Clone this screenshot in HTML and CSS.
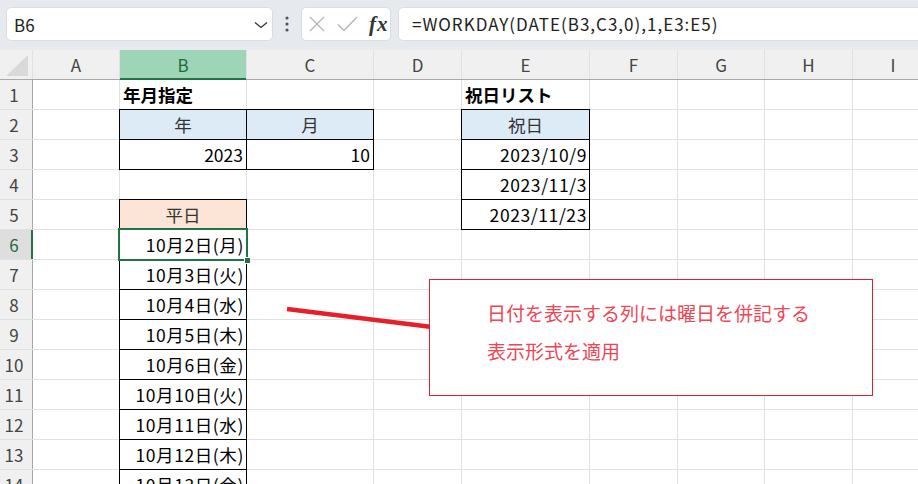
FILE: index.html
```html
<!DOCTYPE html>
<html lang="ja">

<head>
    <meta charset="UTF-8">
    <meta name="viewport" content="width=device-width, initial-scale=1.0">
    <title>WORKDAY</title>
    <link rel="stylesheet" href="styles.css">
</head>

<body>
    <!-- Formula bar -->
    <div class="toolbar">
        <div class="name-box">
            <span>B6</span>
            <svg class="chevron" width="14" height="8" viewBox="0 0 14 8">
                <polyline points="1,1.5 7,6.5 13,1.5" fill="none" stroke="#333" stroke-width="1.3" />
            </svg>
        </div>
        <svg class="dots" width="6" height="16" viewBox="0 0 6 16">
            <circle cx="3" cy="2" r="1.6" fill="#555" />
            <circle cx="3" cy="8" r="1.6" fill="#555" />
            <circle cx="3" cy="14" r="1.6" fill="#555" />
        </svg>
        <div class="fx-box">
            <svg width="16" height="16" viewBox="0 0 16 16">
                <path d="M1 1 L15 15 M15 1 L1 15" stroke="#b4b4b4" stroke-width="1.3" fill="none" />
            </svg>
            <svg width="21" height="16" viewBox="0 0 21 16">
                <polyline points="1,8.5 7,14.5 20,1" stroke="#b4b4b4" stroke-width="1.3" fill="none" />
            </svg>
            <span class="fx">fx</span>
        </div>
        <div class="formula">=WORKDAY(DATE(B3,C3,0),1,E3:E5)</div>
    </div>

    <!-- Sheet -->
    <div class="sheet">
        <div class="row head">
            <div class="c corner"><span class="tri"></span></div>
            <div class="c">A</div>
            <div class="c sel-col">B</div>
            <div class="c">C</div>
            <div class="c">D</div>
            <div class="c">E</div>
            <div class="c">F</div>
            <div class="c">G</div>
            <div class="c">H</div>
            <div class="c">I</div>
        </div>
        <div class="row">
            <div class="c num">1</div>
            <div class="c"></div>
            <div class="c title">年月指定</div>
            <div class="c"></div>
            <div class="c"></div>
            <div class="c title">祝日リスト</div>
            <div class="c"></div>
            <div class="c"></div>
            <div class="c"></div>
            <div class="c"></div>
        </div>
        <div class="row">
            <div class="c num">2</div>
            <div class="c"></div>
            <div class="c box blue">年</div>
            <div class="c box blue">月</div>
            <div class="c"></div>
            <div class="c box blue">祝日</div>
            <div class="c"></div>
            <div class="c"></div>
            <div class="c"></div>
            <div class="c"></div>
        </div>
        <div class="row">
            <div class="c num">3</div>
            <div class="c"></div>
            <div class="c box val">2023</div>
            <div class="c box val">10</div>
            <div class="c"></div>
            <div class="c box val dt">2023/10/9</div>
            <div class="c"></div>
            <div class="c"></div>
            <div class="c"></div>
            <div class="c"></div>
        </div>
        <div class="row">
            <div class="c num">4</div>
            <div class="c"></div>
            <div class="c"></div>
            <div class="c"></div>
            <div class="c"></div>
            <div class="c box val dt">2023/11/3</div>
            <div class="c"></div>
            <div class="c"></div>
            <div class="c"></div>
            <div class="c"></div>
        </div>
        <div class="row">
            <div class="c num">5</div>
            <div class="c"></div>
            <div class="c box peach">平日</div>
            <div class="c"></div>
            <div class="c"></div>
            <div class="c box val dt">2023/11/23</div>
            <div class="c"></div>
            <div class="c"></div>
            <div class="c"></div>
            <div class="c"></div>
        </div>
        <div class="row">
            <div class="c num sel-row">6</div>
            <div class="c"></div>
            <div class="c box val dt active">10月2日(月)<span class="handle"></span></div>
            <div class="c"></div>
            <div class="c"></div>
            <div class="c"></div>
            <div class="c"></div>
            <div class="c"></div>
            <div class="c"></div>
            <div class="c"></div>
        </div>
        <div class="row">
            <div class="c num">7</div>
            <div class="c"></div>
            <div class="c box val dt">10月3日(火)</div>
            <div class="c"></div>
            <div class="c"></div>
            <div class="c"></div>
            <div class="c"></div>
            <div class="c"></div>
            <div class="c"></div>
            <div class="c"></div>
        </div>
        <div class="row">
            <div class="c num">8</div>
            <div class="c"></div>
            <div class="c box val dt">10月4日(水)</div>
            <div class="c"></div>
            <div class="c"></div>
            <div class="c"></div>
            <div class="c"></div>
            <div class="c"></div>
            <div class="c"></div>
            <div class="c"></div>
        </div>
        <div class="row">
            <div class="c num">9</div>
            <div class="c"></div>
            <div class="c box val dt">10月5日(木)</div>
            <div class="c"></div>
            <div class="c"></div>
            <div class="c"></div>
            <div class="c"></div>
            <div class="c"></div>
            <div class="c"></div>
            <div class="c"></div>
        </div>
        <div class="row">
            <div class="c num">10</div>
            <div class="c"></div>
            <div class="c box val dt">10月6日(金)</div>
            <div class="c"></div>
            <div class="c"></div>
            <div class="c"></div>
            <div class="c"></div>
            <div class="c"></div>
            <div class="c"></div>
            <div class="c"></div>
        </div>
        <div class="row">
            <div class="c num">11</div>
            <div class="c"></div>
            <div class="c box val dt">10月10日(火)</div>
            <div class="c"></div>
            <div class="c"></div>
            <div class="c"></div>
            <div class="c"></div>
            <div class="c"></div>
            <div class="c"></div>
            <div class="c"></div>
        </div>
        <div class="row">
            <div class="c num">12</div>
            <div class="c"></div>
            <div class="c box val dt">10月11日(水)</div>
            <div class="c"></div>
            <div class="c"></div>
            <div class="c"></div>
            <div class="c"></div>
            <div class="c"></div>
            <div class="c"></div>
            <div class="c"></div>
        </div>
        <div class="row">
            <div class="c num">13</div>
            <div class="c"></div>
            <div class="c box val dt">10月12日(木)</div>
            <div class="c"></div>
            <div class="c"></div>
            <div class="c"></div>
            <div class="c"></div>
            <div class="c"></div>
            <div class="c"></div>
            <div class="c"></div>
        </div>
        <div class="row">
            <div class="c num">14</div>
            <div class="c"></div>
            <div class="c box val dt">10月13日(金)</div>
            <div class="c"></div>
            <div class="c"></div>
            <div class="c"></div>
            <div class="c"></div>
            <div class="c"></div>
            <div class="c"></div>
            <div class="c"></div>
        </div>

        <!-- Callout shape -->
        <svg class="arrow" width="160" height="30" viewBox="0 0 160 30">
            <line x1="3" y1="3" x2="148" y2="21" stroke="#e5202b" stroke-width="4.5" />
        </svg>
        <div class="callout">
            日付を表示する列には曜日を併記する<br>表示形式を適用
        </div>
    </div>
</body>

</html>
```

FILE: styles.css
```css
body {
    margin: 0;
    padding: 0;
    width: 918px;
    height: 484px;
    overflow: hidden;
    background-color: #fff;
    font-family: "Noto Sans CJK JP", sans-serif;
    color: #000;
}

/* Formula bar */
.toolbar {
    display: flex;
    align-items: center;
    height: 50px;
    padding: 0 0 2px 6px;
    box-sizing: border-box;
    background-color: #e6e9ee;
}

.name-box {
    display: flex;
    align-items: center;
    justify-content: space-between;
    width: 267px;
    height: 34px;
    box-sizing: border-box;
    padding: 0 4px 0 7px;
    background-color: #fff;
    border: 1px solid #d9dce1;
    border-radius: 5px;
    font-size: 17px;
    color: #222;
}

.chevron {
    margin-top: 2px;
}

.dots {
    margin: 0 11px 0 11px;
}

.fx-box {
    display: flex;
    align-items: center;
    gap: 12px;
    width: 90px;
    height: 34px;
    box-sizing: border-box;
    padding-left: 7px;
    background-color: #fff;
    border: 1px solid #d9dce1;
    border-radius: 5px;
}

.fx {
    font-family: "Liberation Serif", serif;
    font-style: italic;
    font-weight: bold;
    font-size: 21px;
    color: #333;
    margin-left: -1px;
    letter-spacing: 1px;
}

.formula {
    flex: 1;
    height: 34px;
    box-sizing: border-box;
    margin-left: 7px;
    margin-right: -10px;
    padding-left: 13px;
    line-height: 32px;
    background-color: #fff;
    border: 1px solid #d9dce1;
    border-radius: 5px;
    font-size: 17px;
    letter-spacing: 1px;
    color: #222;
}

/* Sheet grid */
.sheet {
    position: relative;
    display: flex;
    flex-direction: column;
}

.row {
    display: grid;
    grid-template-columns: 32px 86px 126px 126px 87px 127px 87px 86px 87px 80px;
    column-gap: 1px;
    height: 29px;
    background-color: #e1e1e1;
    border-bottom: 1px solid #e1e1e1;
    flex-shrink: 0;
}

.c {
    position: relative;
    background-color: #fff;
    font-size: 17.5px;
    line-height: 29px;
    padding: 0 3px;
    white-space: nowrap;
}

.head {
    border-bottom-color: #a8a8a8;
}

.head .c {
    background-color: #f0f0f0;
    text-align: center;
    font-size: 17px;
    color: #444;
}

.corner .tri {
    position: absolute;
    left: 6px;
    bottom: 3px;
    width: 0;
    height: 0;
    border-left: 22px solid transparent;
    border-bottom: 21px solid #d9d9d9;
}

.head .sel-col {
    background-color: #9fd5b7;
    color: #1d6b40;
    box-shadow: inset 0 -1px 0 #217346, 0 1px 0 #217346;
}

.num {
    background-color: #f0f0f0;
    text-align: center;
    font-size: 17px;
    color: #444;
    padding: 0 4px 0 0;
    box-shadow: 1px 0 0 #a8a8a8;
}

.num.sel-row {
    background-color: #dedede;
    color: #1d6b40;
    box-shadow: inset -1px 0 0 #217346, 1px 0 0 #217346;
}

.title {
    font-weight: bold;
}

.box {
    outline: 1px solid #000;
}

.blue {
    background-color: #ddebf7;
    text-align: center;
    color: #333;
}

.peach {
    background-color: #fce4d6;
    text-align: center;
    color: #333;
}

.val {
    text-align: right;
}

.dt {
    letter-spacing: 0.6px;
    padding-right: 2px;
}

.active::after {
    content: "";
    position: absolute;
    left: -2px;
    top: -2px;
    right: -2px;
    bottom: -2px;
    border: 2px solid #217346;
    z-index: 2;
}

.handle {
    position: absolute;
    right: -5px;
    bottom: -5px;
    width: 5px;
    height: 5px;
    background-color: #217346;
    border: 1px solid #fff;
    z-index: 3;
}

/* Shape + callout */
.arrow {
    position: absolute;
    left: 284px;
    top: 256px;
}

.callout {
    position: absolute;
    left: 429px;
    top: 229px;
    width: 444px;
    height: 117px;
    box-sizing: border-box;
    padding: 14px 0 0 57px;
    background-color: #fff;
    border: 1px solid #e0202b;
    color: #ef4656;
    font-size: 19px;
    line-height: 38px;
}
```
